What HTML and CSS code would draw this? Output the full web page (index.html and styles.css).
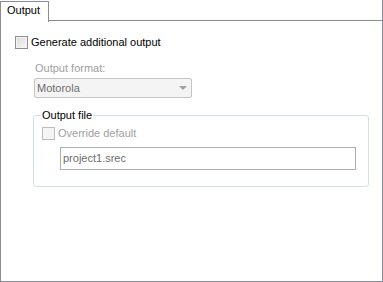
FILE: index.html
```
<!DOCTYPE html>
<html lang="en">

<head>
    <meta charset="UTF-8">
    <title>Output</title>
    <link rel="stylesheet" href="styles.css">
</head>

<body>
    <div class="window">
        <!-- Tab strip -->
        <div class="tabstrip">
            <div class="tab">Output</div>
            <div class="tabfill"></div>
        </div>

        <!-- Tab page -->
        <div class="panel">
            <label class="checkrow">
                <span class="check"></span>
                <span>Generate additional output</span>
            </label>

            <div class="options">
                <div class="fieldlabel">Output format:</div>
                <div class="select">
                    <span>Motorola</span>
                    <span class="arrow"></span>
                </div>

                <fieldset class="group">
                    <legend>Output file</legend>
                    <label class="checkrow disabled">
                        <span class="check"></span>
                        <span>Override default</span>
                    </label>
                    <div class="textbox">project1.srec</div>
                </fieldset>
            </div>
        </div>
    </div>
</body>

</html>
```

FILE: styles.css
```
body {
    margin: 0;
    padding: 0;
    background-color: white;
    font-family: "Liberation Sans", Arial, sans-serif;
    font-size: 11px;
    line-height: 13px;
    color: black;
}

.window {
    width: 383px;
    height: 282px;
    display: flex;
    flex-direction: column;
}

.tabstrip {
    display: flex;
    height: 21px;
}

.tab {
    margin-top: 1px;
    width: 41px;
    height: 18px;
    padding: 2px 0 0 6px;
    border: 1px solid #898c95;
    border-bottom: none;
    background-color: white;
}

.tabfill {
    flex: 1;
    border-bottom: 1px solid #898c95;
    border-right: 1px solid #898c95;
}

.panel {
    flex: 1;
    border: 1px solid #898c95;
    border-top: none;
    padding: 15px 0 0 14px;
}

.checkrow {
    display: flex;
    align-items: center;
    gap: 3px;
    height: 13px;
}

.check {
    width: 11px;
    height: 11px;
    border: 1px solid #8e8f8f;
    background: linear-gradient(135deg, #dcdcdc, #f6f6f6);
    box-shadow: inset 0 0 0 1px #f4f4f4;
}

.options {
    margin-left: 19px;
    margin-top: 13px;
}

.fieldlabel {
    color: #a0a0a0;
    margin-left: 1px;
}

.select {
    margin-top: 3px;
    width: 154px;
    height: 18px;
    padding-left: 2px;
    border: 1px solid #c5c5c5;
    border-radius: 2px;
    background-color: #f4f4f4;
    color: #6d6d6d;
    display: flex;
    align-items: center;
    justify-content: space-between;
}

.arrow {
    margin-right: 4px;
    width: 0;
    height: 0;
    border-left: 4px solid transparent;
    border-right: 4px solid transparent;
    border-top: 4px solid #a0a0a0;
}

.group {
    box-sizing: border-box;
    margin: 11px 0 0 -1px;
    width: 336px;
    padding: 0 0 16px 8px;
    border: 1px solid #d5dfe5;
    border-radius: 3px;
}

.group legend {
    padding: 0 1px;
    margin-left: -1px;
}

.group .checkrow {
    margin-top: 5px;
}

.disabled {
    color: #a0a0a0;
}

.disabled .check {
    border-color: #bcbcbc;
    background: #f4f4f4;
    box-shadow: none;
}

.textbox {
    margin: 7px 0 0 18px;
    width: 292px;
    height: 21px;
    padding-left: 2px;
    line-height: 21px;
    border: 1px solid #abadb3;
    color: #6d6d6d;
}
```
